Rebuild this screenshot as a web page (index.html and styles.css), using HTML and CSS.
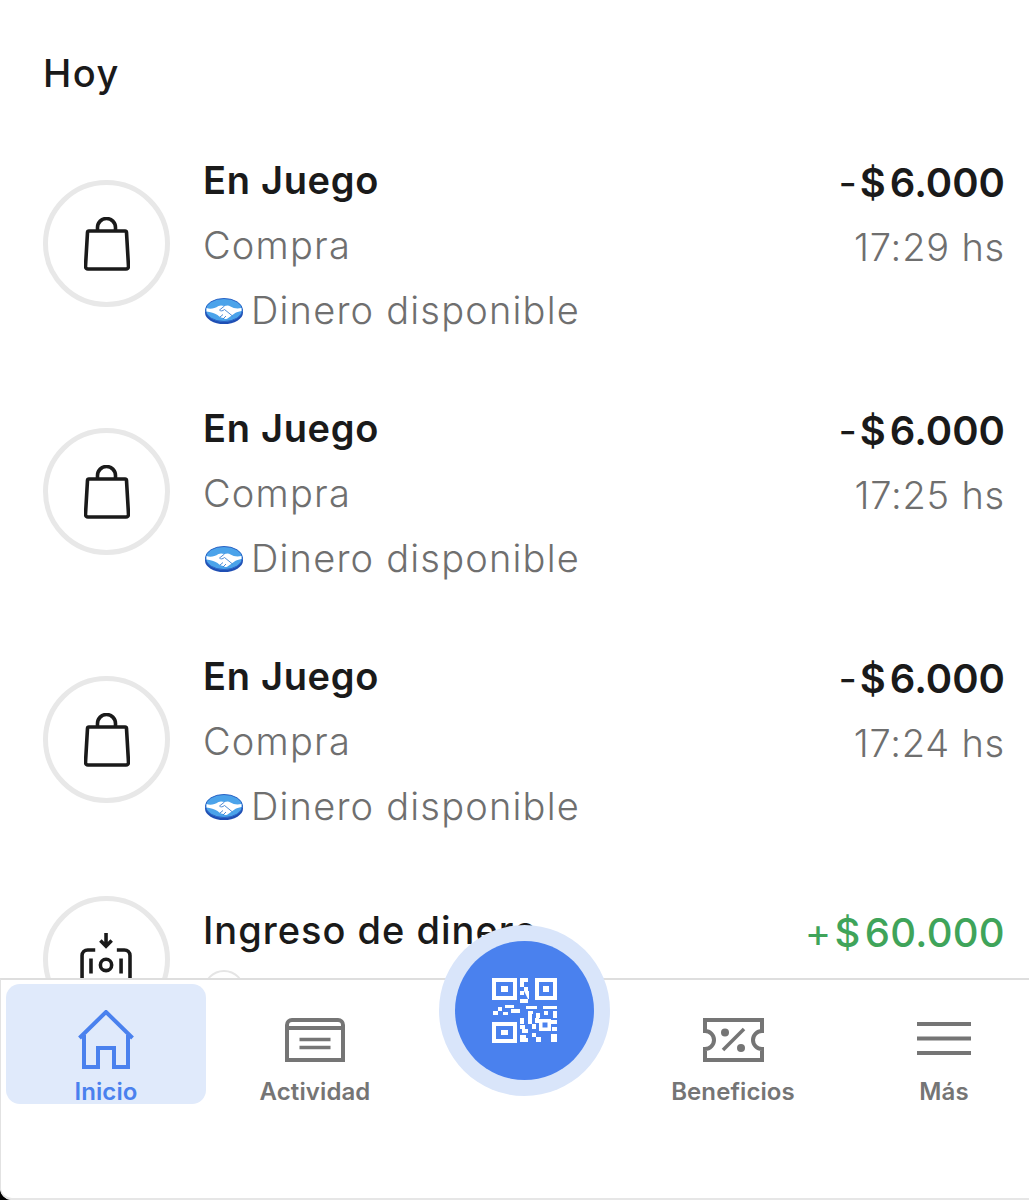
FILE: index.html
```html
<!DOCTYPE html>
<html lang="es">
<head>
<meta charset="utf-8">
<title>Actividad</title>
<link rel="stylesheet" href="styles.css">
</head>
<body>
<svg class="defs" width="0" height="0" aria-hidden="true">
  <symbol id="bag" viewBox="0 0 46 54">
    <path d="M5 14h36a1.500 1.500 0 0 1 1.500 1.400l2 34a2.500 2.500 0 0 1-2.500 2.600H4a2.500 2.500 0 0 1-2.500-2.600l2-34A1.500 1.500 0 0 1 5 14Z M13.500 14v-3.500a9 9 0 0 1 18 0V14" fill="none" stroke="#1a1a1a" stroke-width="3.600" stroke-linejoin="round"/>
  </symbol>
  <symbol id="mp" viewBox="0 0 38 26">
    <ellipse cx="19" cy="14.500" rx="19" ry="11.500" fill="#1f4fb4"/>
    <ellipse cx="19" cy="12" rx="18.500" ry="11.500" fill="#4ba3ea"/>
    <ellipse cx="19" cy="12" rx="18.500" ry="11.500" fill="none" stroke="#2a62c4" stroke-width="1"/>
    <path d="M1.500 10c4 1.500 8 .500 12-2 2-1 4-.500 6 0 2-.500 4-1 6 .500 3 2 7 2.500 11 1.500v3c-3 .500-5 1-7 2.500l-7 5c-2 1-3 .500-4-.500-2 0-4-1-6-3-3-2-7-3-11-3.500Z" fill="#fff"/>
    <path d="M19.500 8l-5 4c1.500 1.500 3 1 5-.500l8 6.500M15 19l3-2.500M18 21l3-3" fill="none" stroke="#3c7fd0" stroke-width=".9"/>
  </symbol>
</svg>

<div class="screen">
  <main class="feed">
    <h2 class="day">Hoy</h2>

    <article class="row">
      <div class="avatar"><svg class="bag-icon"><use href="#bag"/></svg></div>
      <div class="info">
        <div class="title">En Juego</div>
        <div class="sub">Compra</div>
        <div class="sub method"><svg class="mp-logo"><use href="#mp"/></svg>Dinero disponible</div>
      </div>
      <div class="money">
        <div class="amount"><span class="sign">-</span><span class="cur">$</span>6.000</div>
        <div class="time">17:29 hs</div>
      </div>
    </article>

    <article class="row">
      <div class="avatar"><svg class="bag-icon"><use href="#bag"/></svg></div>
      <div class="info">
        <div class="title">En Juego</div>
        <div class="sub">Compra</div>
        <div class="sub method"><svg class="mp-logo"><use href="#mp"/></svg>Dinero disponible</div>
      </div>
      <div class="money">
        <div class="amount"><span class="sign">-</span><span class="cur">$</span>6.000</div>
        <div class="time">17:25 hs</div>
      </div>
    </article>

    <article class="row">
      <div class="avatar"><svg class="bag-icon"><use href="#bag"/></svg></div>
      <div class="info">
        <div class="title">En Juego</div>
        <div class="sub">Compra</div>
        <div class="sub method"><svg class="mp-logo"><use href="#mp"/></svg>Dinero disponible</div>
      </div>
      <div class="money">
        <div class="amount"><span class="sign">-</span><span class="cur">$</span>6.000</div>
        <div class="time">17:24 hs</div>
      </div>
    </article>

    <article class="row row-income">
      <div class="avatar avatar-income">
        <svg class="income-icon" viewBox="0 0 56 50">
          <g fill="none" stroke="#1a1a1a" stroke-width="3.800">
            <path d="M27.500 0v13M21.500 8l6 6 6-6"/>
            <path d="M2 50V24a6 6 0 0 1 6-6h8M53 50V24a6 6 0 0 0-6-6h-8"/>
            <circle cx="27.500" cy="34" r="6"/>
            <path d="M11.500 27v16M43.500 27v16"/>
          </g>
        </svg>
      </div>
      <div class="info">
        <div class="title">Ingreso de dinero</div>
        <div class="sub"><span class="source-dot"></span></div>
      </div>
      <div class="money">
        <div class="amount amount-in"><span class="sign">+</span><span class="cur">$</span>60.000</div>
      </div>
    </article>
  </main>

  <nav class="tabbar">
    <a class="tab tab-active">
      <svg class="tab-icon" viewBox="0 0 56 60" width="56" height="60">
        <path d="M1.500 28 28 2l26.500 26M6 25v32h14V38h16v19h14V25" fill="none" stroke="#4a81ee" stroke-width="4"/>
      </svg>
      <span class="tab-label">Inicio</span>
    </a>
    <a class="tab">
      <svg class="tab-icon" viewBox="0 0 60 44" width="60" height="44">
        <path d="M2 42V7a5 5 0 0 1 5-5h46a5 5 0 0 1 5 5v35ZM2 10h56" fill="none" stroke="#757575" stroke-width="4"/>
        <path d="M14.500 21.500h31M14.500 29.500h31" stroke="#757575" stroke-width="3.500"/>
      </svg>
      <span class="tab-label">Actividad</span>
    </a>
    <a class="qr-tab" aria-label="Código QR">
      <span class="qr-ring"><span class="qr-disc">
        <svg class="qr-icon" viewBox="0 0 65 65" width="65" height="65" fill="#fff">
          <path d="M0 0h25v22H0ZM4 4v14h17V4Z" fill-rule="evenodd"/><rect x="9" y="8" width="7" height="6"/>
          <path d="M43 0h22v22H43ZM47 4v14h14V4Z" fill-rule="evenodd"/><rect x="51" y="8" width="6" height="6"/>
          <path d="M0 44h25v21H0ZM4 48v13h17V48Z" fill-rule="evenodd"/><rect x="9" y="52" width="7" height="5"/>
          <path d="M28 0h8v4h-4v5h-4ZM32 9h4v4h-4ZM28 13h4v4h-4ZM32 13h5v8h-1v4h-8v-4h8Z"/>
          <path d="M1 33h5v4H1ZM6 29h4v4H6ZM13 27h9v3h-9ZM19 31h9v4h-9ZM11 34h5v3h-5ZM34 28h11v3H34ZM51 28h14v3H51ZM36 33h5v3h-5Z"/>
          <path d="M28 40h4v6h-4ZM36 36h4v10h-4ZM28 47h5v4h-5ZM30 51h6v4h-6ZM34 57h-6v7h8v-4h-2ZM44 35h4v5h-4ZM52 33h4v4h-4ZM61 33h4v7h-4ZM40 46h4v5h-4ZM40 55h4v4h-4ZM44 59h5v5h-5ZM59 56h6v8h-6Z"/>
          <path d="M47 41h12v12H47ZM50.500 44.500v5h5v-5Z" fill-rule="evenodd"/>
          <path d="M43 40h4v5h-4ZM59 42h6v4h-6ZM60 49h5v4h-5Z"/>
        </svg>
      </span></span>
    </a>
    <a class="tab">
      <svg class="tab-icon" viewBox="0 0 61 44" width="61" height="44">
        <path d="M2 2h57v11a9 9 0 0 0 0 18v11H2V31a9 9 0 0 0 0-18Z" fill="none" stroke="#757575" stroke-width="4"/>
        <circle cx="22" cy="14.500" r="4" fill="#757575"/><circle cx="38" cy="30" r="4" fill="#757575"/>
        <path d="M20 32 41 11" stroke="#757575" stroke-width="3.500"/>
      </svg>
      <span class="tab-label">Beneficios</span>
    </a>
    <a class="tab tab-more">
      <svg class="tab-icon" viewBox="0 0 54 44" width="54" height="44">
        <path d="M0 6h54M0 20.500h54M0 35h54" stroke="#757575" stroke-width="4.200"/>
      </svg>
      <span class="tab-label">Más</span>
    </a>
  </nav>
</div>
</body>
</html>
```

FILE: styles.css
```css
* { box-sizing: border-box; }

html, body {
  margin: 0;
  height: 1200px;
  overflow: hidden;
  background: #000;
}

body {
  font-family: "Inter", "Open Sans", Arial, sans-serif;
  color: #1a1a1a;
}

.defs { position: absolute; }

.screen {
  position: relative;
  height: 1200px;
  background: #fff;
  overflow: hidden;
  border-bottom-left-radius: 12px;
}

.feed { padding: 49px 24px 0 43px; }

.day {
  margin: 0 0 51px;
  font-size: 38px;
  line-height: 48px;
  letter-spacing: 1.500px;
  font-weight: 500;
  color: #1a1a1a;
}

.row {
  display: flex;
  align-items: flex-start;
  margin-bottom: 53px;
}

.row-income { margin-top: 59px; }

.avatar {
  flex: none;
  width: 127px;
  height: 127px;
  margin: 32px 33px 0 0;
  border: 5px solid #e8e8e8;
  border-radius: 50%;
  display: flex;
  align-items: center;
  justify-content: center;
}

.avatar-income {
  margin-top: -2px;
  align-items: flex-start;
  padding-top: 32px;
}

.bag-icon { width: 46px; height: 54px; }

.income-icon { width: 53px; height: 47px; flex: none; }

.info { flex: 1; min-width: 0; }

.title {
  font-size: 38px;
  line-height: 65px;
  letter-spacing: .700px;
  font-weight: 600;
  white-space: nowrap;
}

.row-income .title { font-weight: 500; letter-spacing: 1px; }

.sub {
  font-size: 38px;
  line-height: 65px;
  letter-spacing: 1.200px;
  font-weight: 300;
  color: #6f6f6f;
  white-space: nowrap;
}

.method {
  display: flex;
  align-items: center;
  margin-left: 2px;
}

.mp-logo {
  flex: none;
  width: 38px;
  height: 26px;
  margin-right: 8px;
}

.source-dot {
  display: block;
  width: 42px;
  height: 42px;
  margin-top: 7px;
  border: 2px solid #e5e5e5;
  border-radius: 50%;
}

.money { flex: none; padding-top: 2px; text-align: right; }

.amount {
  font-size: 40px;
  line-height: 65px;
  font-weight: 600;
  white-space: nowrap;
}

.amount-in { color: #3fa45a; font-weight: 500; letter-spacing: .300px; }

.sign { margin-right: 3px; font-weight: 400; }
.cur { margin-right: 4px; }

.time {
  font-size: 38px;
  line-height: 65px;
  letter-spacing: .800px;
  font-weight: 300;
  color: #6f6f6f;
  white-space: nowrap;
}

.tabbar {
  position: absolute;
  left: 0;
  right: 0;
  top: 978px;
  height: 222px;
  padding: 4px 0 0 5px;
  display: grid;
  grid-template-columns: repeat(4, 200px) 188px;
  column-gap: 9px;
  align-items: start;
  background: #fff;
  border-top: 2px solid #dedede;
  border-left: 1px solid #e2e2e2;
  border-bottom: 2px solid #e6e6e6;
  border-bottom-left-radius: 12px;
}

.tab {
  height: 120px;
  padding-top: 34px;
  display: flex;
  flex-direction: column;
  align-items: center;
  border-radius: 14px;
  color: #757575;
}

.tab-active {
  padding-top: 26px;
  background: #e0eafb;
  color: #4a81ee;
}

.tab-more { padding-left: 16px; }

.tab-icon { display: block; flex: none; }

.tab-label {
  height: 30px;
  margin-top: 15px;
  font-size: 24px;
  line-height: 30px;
  letter-spacing: .100px;
  font-weight: 600;
  white-space: nowrap;
}

.tab-active .tab-label { margin-top: 7px; }

.qr-tab {
  display: flex;
  justify-content: center;
  margin-top: -59px;
}

.qr-ring {
  width: 171px;
  height: 171px;
  padding: 16px;
  border-radius: 50%;
  background: #d9e5fa;
}

.qr-disc {
  height: 139px;
  display: flex;
  align-items: center;
  justify-content: center;
  border-radius: 50%;
  background: #4a81ee;
}

.qr-icon { display: block; }
```
